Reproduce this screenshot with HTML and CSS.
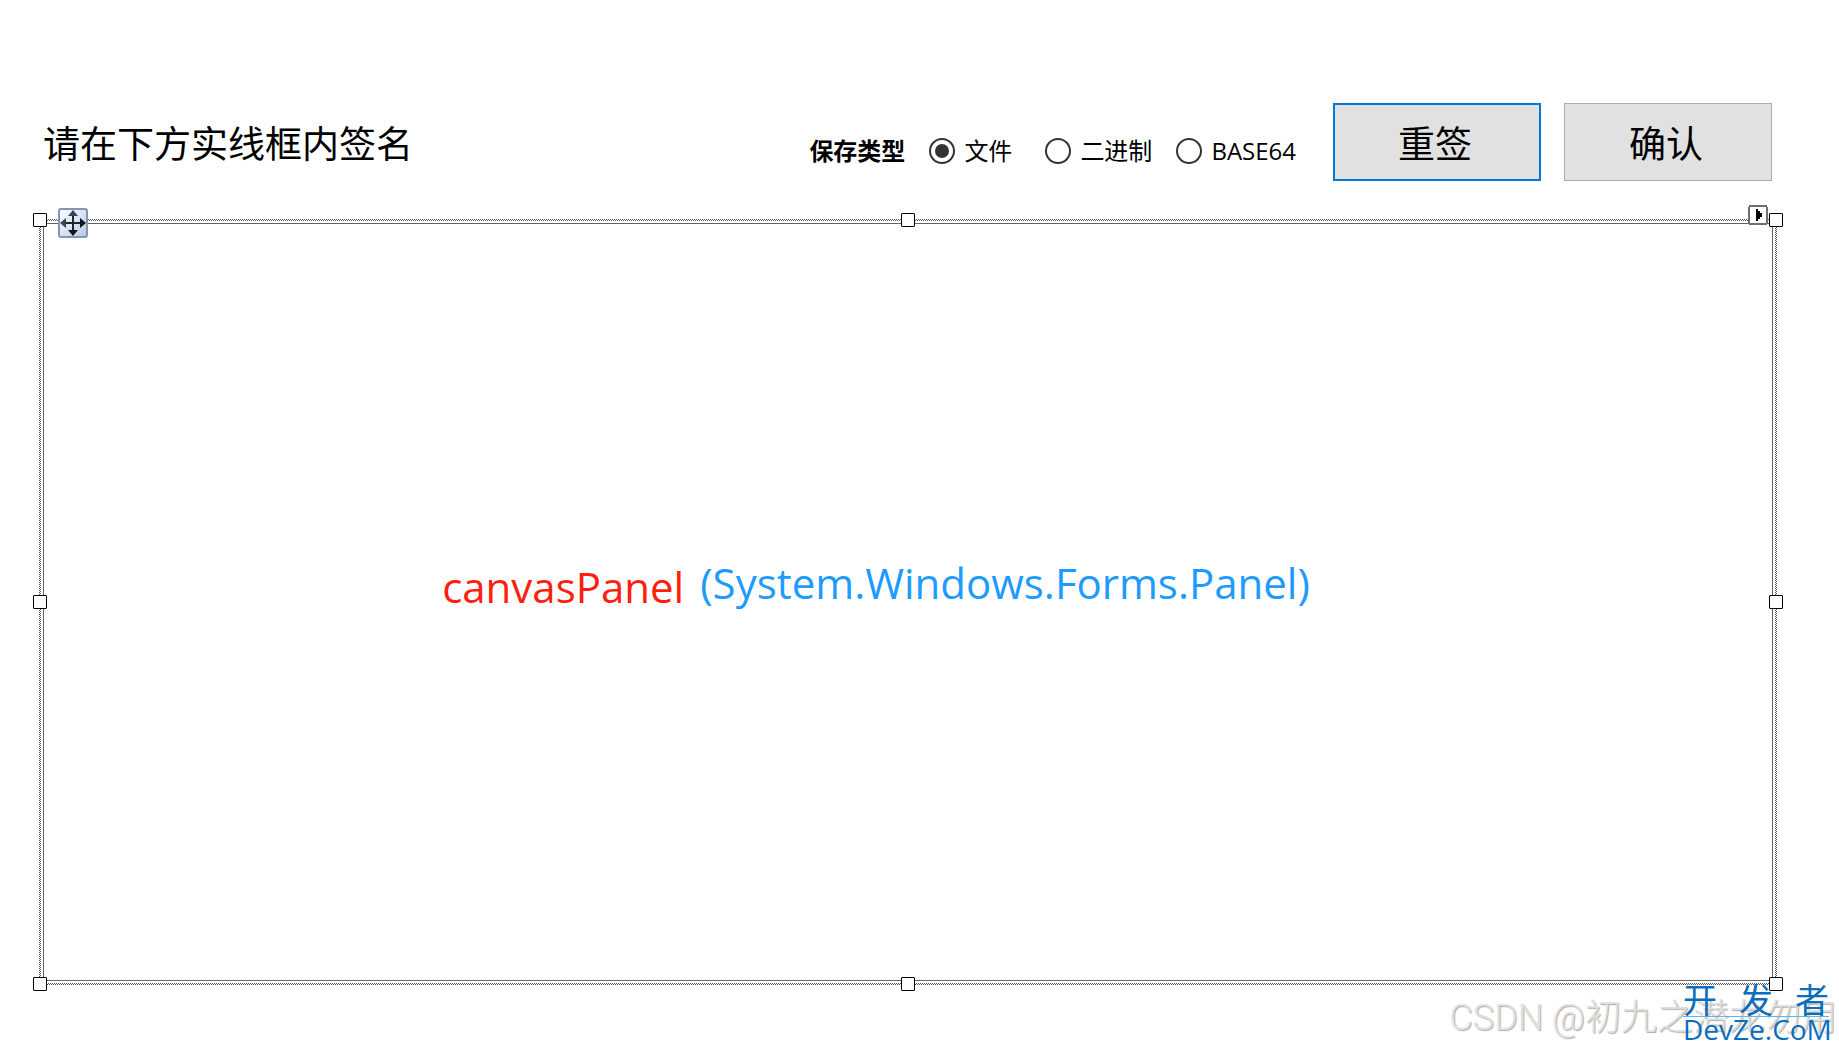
FILE: index.html
```html
<!DOCTYPE html>
<html lang="zh-CN">
<head>
    <meta charset="UTF-8">
    <meta name="viewport" content="width=device-width, initial-scale=1.0">
    <title>签名</title>
    <link rel="stylesheet" href="styles.css">
</head>
<body>
    <div class="form">
        <header class="toolbar">
            <h1 class="title">请在下方实线框内签名</h1>
            <div class="save-type" role="radiogroup" aria-labelledby="save-label">
                <span class="save-label" id="save-label">保存类型</span>
                <label class="option option-file"><input type="radio" name="saveType" checked>文件</label>
                <label class="option option-binary"><input type="radio" name="saveType">二进制</label>
                <label class="option"><input type="radio" name="saveType">BASE64</label>
            </div>
            <div class="buttons">
                <button type="button" class="btn btn-default">重签</button>
                <button type="button" class="btn">确认</button>
            </div>
        </header>

        <main class="selection">
            <div class="selection-gap">
                <div class="canvas-panel">
                    <p class="caption"><span class="panel-name">canvasPanel</span><span class="panel-type">(System.Windows.Forms.Panel)</span></p>
                </div>
            </div>
            <svg class="move-grip" viewBox="0 0 30 30" width="30" height="30">
                <defs>
                    <linearGradient id="grip" x1="0" y1="0" x2="1" y2="1">
                        <stop offset="0" stop-color="#ffffff"/>
                        <stop offset="1" stop-color="#b4c8e4"/>
                    </linearGradient>
                </defs>
                <rect x="1" y="1" width="28" height="28" rx="2" fill="url(#grip)" stroke="#8397b3" stroke-width="2"/>
                <path d="M15 5V25M5 15H25" stroke="#1c2530" stroke-width="2"/>
                <path d="M15 2L20 8H10ZM2 15L8 10V20Z" fill="#34445a"/>
                <path d="M15 28L20 22H10ZM28 15L22 10V20Z" fill="#10151c"/>
            </svg>
            <svg class="smart-tag" viewBox="0 0 20 20" width="20" height="20">
                <rect x="1" y="1" width="18" height="18" fill="#fff"/>
                <path d="M1 0H19V2H1ZM1 18H19V20H1ZM0 2H2V18H0ZM18 2H20V18H18Z" fill="#716f64"/>
                <path d="M8 4H10V6H12V8H14V12H12V14H10V16H8Z" fill="#000"/>
            </svg>
            <span class="handle top left"></span>
            <span class="handle top center"></span>
            <span class="handle top right"></span>
            <span class="handle middle left"></span>
            <span class="handle middle right"></span>
            <span class="handle bottom left"></span>
            <span class="handle bottom center"></span>
            <span class="handle bottom right"></span>
        </main>

        <div class="watermark">CSDN @初九之潜龙勿用</div>
        <div class="site-mark">
            <div class="site-name"><span>开</span><span>发</span><span>者</span></div>
            <div class="site-url">DevZe.CoM</div>
        </div>
    </div>
</body>
</html>
```

FILE: styles.css
```css
* {
    box-sizing: border-box;
}
body {
    margin: 0;
    background: #fff;
    color: #000;
    font-family: "Open Sans", "Noto Sans CJK SC", sans-serif;
}
.form {
    position: relative;
    display: flex;
    flex-direction: column;
    min-height: 100vh;
    padding: 103px 62px 66px 39px;
    overflow: hidden;
}
.toolbar {
    display: flex;
    align-items: center;
    height: 78px;
    margin-bottom: 38px;
    padding: 0 5px 0 4px;
}
.title {
    margin: 0 auto 0 0;
    font-size: 37px;
    font-weight: 400;
    line-height: 48px;
    font-family: "Noto Sans CJK SC", sans-serif;
}
.save-type {
    display: flex;
    align-items: center;
    margin: 18px 37px 0 0;
    font-size: 24px;
    line-height: 32px;
}
.save-label {
    margin-right: 24px;
    font-weight: 700;
}
.option {
    display: flex;
    align-items: center;
    gap: 9px;
}
.option-file {
    margin-right: 33px;
}
.option-binary {
    margin-right: 24px;
}
.option input {
    appearance: none;
    display: grid;
    place-items: center;
    width: 26px;
    height: 26px;
    margin: 0;
    border: 2px solid #333;
    border-radius: 50%;
}
.option input:checked::before {
    content: "";
    width: 14px;
    height: 14px;
    border-radius: 50%;
    background: #333;
}
.buttons {
    display: flex;
    gap: 23px;
}
.btn {
    width: 208px;
    height: 78px;
    padding: 0 4px 0 0;
    border: 1px solid #adadad;
    background: #e1e1e1;
    color: #000;
    font-family: "Noto Sans CJK SC", sans-serif;
    font-size: 37px;
}
.btn-default {
    border: 2px solid #0078d7;
}

/* Designer selection: dithered outline, gap, then the panel border */
.selection {
    position: relative;
    display: flex;
    flex: 1;
    padding: 2px;
    background: repeating-conic-gradient(#555 0 25%, #fff 0 50%) 0 0 / 2px 2px;
}
.selection-gap {
    display: flex;
    flex: 1;
    padding: 2px;
    background: #fff;
}
.canvas-panel {
    display: flex;
    flex: 1;
    align-items: center;
    justify-content: center;
    border: 1px solid #646464;
}
.caption {
    display: flex;
    gap: 16px;
    margin: 0 64px 34px 0;
    font-size: 42px;
    line-height: 60px;
}
.panel-name {
    padding-top: 4px;
    color: #ff1e10;
}
.panel-type {
    color: #1e9bff;
}
.handle {
    position: absolute;
    width: 14px;
    height: 14px;
    border: 1px solid #000;
    border-radius: 1px;
    background: #fff;
}
.top {
    top: -6px;
}
.middle {
    top: calc(50% - 7px);
}
.bottom {
    bottom: -6px;
}
.left {
    left: -6px;
}
.center {
    left: calc(50% - 7px);
}
.right {
    right: -6px;
}
.move-grip {
    position: absolute;
    top: -11px;
    left: 19px;
}
.smart-tag {
    position: absolute;
    top: -14px;
    right: 9px;
}

.watermark {
    position: absolute;
    right: 2px;
    bottom: 8px;
    color: #e0e0e0;
    font-family: Roboto, "Noto Sans CJK SC", sans-serif;
    font-size: 36px;
    font-weight: 300;
    line-height: 50px;
    text-shadow: 1px 1px 1px #aaa;
    white-space: nowrap;
}
.site-mark {
    position: absolute;
    right: 10px;
    bottom: 10px;
    width: 146px;
    color: #0b6ebd;
}
.site-name {
    display: flex;
    justify-content: space-between;
    border-bottom: 1px solid #5bb8f5;
    font-size: 34px;
    line-height: 32px;
}
.site-url {
    font-size: 28px;
    line-height: 24px;
}
```
